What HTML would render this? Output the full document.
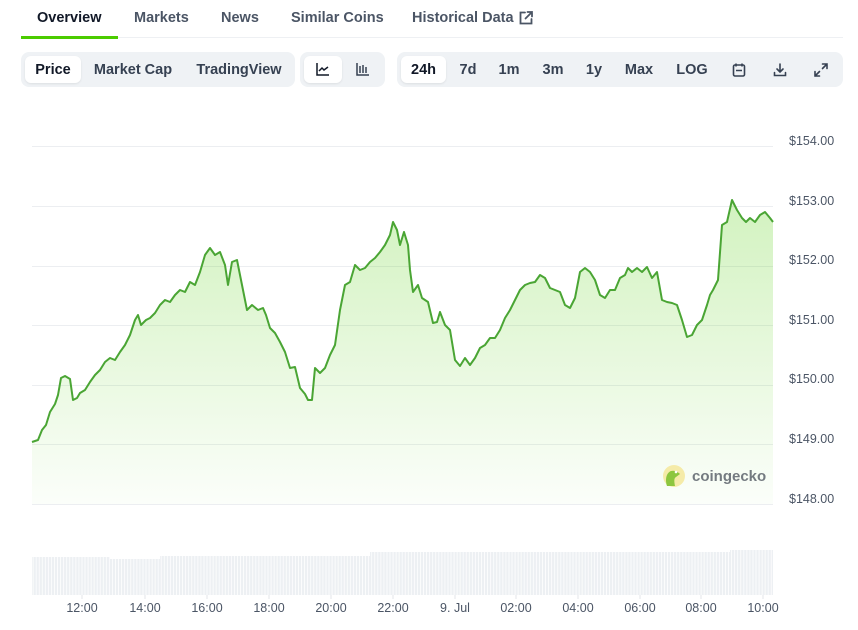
<!DOCTYPE html>
<html><head><meta charset="utf-8"><style>
*{margin:0;padding:0;box-sizing:border-box}
body{width:858px;height:630px;background:#fff;font-family:"Liberation Sans",sans-serif;position:relative;overflow:hidden;color:#4b5565}
.a{position:absolute;white-space:nowrap}
.tab{top:10px;font-size:14.5px;font-weight:bold;color:#4b5565}
.grp{position:absolute;top:52px;height:35px;background:#eff2f5;border-radius:8px}
.btn{position:absolute;top:4px;height:27px;line-height:29px;font-size:14.5px;font-weight:bold;color:#364152;text-align:center}
.on{background:#fff;border-radius:6px;box-shadow:0 1px 2px rgba(0,0,0,.08);color:#111827}
.yl{left:789px;font-size:12.5px;color:#4b5565}
.xl{top:601px;font-size:12.5px;color:#4b5565;transform:translateX(-50%)}
</style></head><body>
<div class="a tab" style="left:37px;color:#111827">Overview</div>
<div class="a tab" style="left:134px">Markets</div>
<div class="a tab" style="left:221px">News</div>
<div class="a tab" style="left:291px">Similar Coins</div>
<div class="a tab" style="left:412px">Historical Data</div>
<svg class="a" style="left:518px;top:10px" width="16" height="16" viewBox="0 0 16 16" fill="none" stroke="#4b5565" stroke-width="1.8" stroke-linecap="round"><path d="M7 2.5H2.5v11h11V9M9.5 2h4.5v4.5M14 2L7.5 8.5"/></svg>
<div class="a" style="left:21px;top:37px;width:822px;height:1px;background:#eef0f3"></div>
<div class="a" style="left:21px;top:36px;width:97px;height:3px;background:#4bcc00"></div>

<div class="grp" style="left:21px;width:274px">
<div class="btn on" style="left:4px;width:56px">Price</div>
<div class="btn" style="left:66px;width:92px">Market Cap</div>
<div class="btn" style="left:168px;width:100px">TradingView</div>
</div>
<div class="grp" style="left:300px;width:85px">
<div class="btn on" style="left:4px;width:38px"><svg width="16" height="16" viewBox="0 0 16 16" style="margin-top:5px" fill="none" stroke="#111827" stroke-width="1.5"><path d="M2 2v12h12M4 10l3-3 2 2 4-3"/></svg></div>
<div class="btn" style="left:44px;width:38px"><svg width="16" height="16" viewBox="0 0 16 16" style="margin-top:5px" fill="none" stroke="#364152" stroke-width="1.5"><path d="M2 2v12h12M5 5v7M8 4v8M11 6v6"/></svg></div>
</div>
<div class="grp" style="left:397px;width:446px">
<div class="btn on" style="left:4px;width:45px">24h</div>
<div class="btn" style="left:56px;width:30px">7d</div>
<div class="btn" style="left:96px;width:32px">1m</div>
<div class="btn" style="left:139px;width:34px">3m</div>
<div class="btn" style="left:183px;width:28px">1y</div>
<div class="btn" style="left:222px;width:40px">Max</div>
<div class="btn" style="left:274px;width:42px">LOG</div>
<svg class="a" style="left:334px;top:10px" width="16" height="16" viewBox="0 0 16 16" fill="none" stroke="#364152" stroke-width="1.6"><rect x="2.5" y="3" width="11" height="11" rx="1.5"/><path d="M5 1.5v3M11 1.5v3M5 8.5h6"/></svg>
<svg class="a" style="left:375px;top:10px" width="16" height="16" viewBox="0 0 16 16" fill="none" stroke="#364152" stroke-width="1.6" stroke-linecap="round"><path d="M8 2v8M5 7l3 3 3-3M2.5 10.5v3h11v-3"/></svg>
<svg class="a" style="left:416px;top:10px" width="16" height="16" viewBox="0 0 16 16" fill="none" stroke="#364152" stroke-width="1.6" stroke-linecap="round"><path d="M9.5 2H14v4.5M14 2L9.5 6.5M6.5 14H2V9.5M2 14l4.5-4.5"/></svg>
</div>

<svg class="a" style="left:0;top:0" width="858" height="630">
<defs><linearGradient id="g" x1="0" y1="0" x2="0" y2="1"><stop offset="0" stop-color="#4bcc00" stop-opacity=".25"/><stop offset="1" stop-color="#4bcc00" stop-opacity=".02"/></linearGradient>
<pattern id="vb" width="3.05" height="60" patternUnits="userSpaceOnUse"><rect x="0" y="0" width="2.3" height="60" fill="#edf0f3"/></pattern></defs>
<g stroke="#eceef1" stroke-width="1"><path d="M32 146.5H773M32 206.5H773M32 266.5H773M32 325.5H773M32 385.5H773M32 444.5H773M32 504.5H773"/></g>
<path fill="url(#vb)" d="M32 557H110V559H160V556H370V552H730V550H773V595H32Z"/>
<g stroke="#e3e6ea"><path d="M82 595v4M145 595v4M207 595v4M269 595v4M331 595v4M393 595v4M455 595v4M516 595v4M578 595v4M640 595v4M701 595v4M763 595v4"/></g>
<path fill="url(#g)" d="M32 442L38 440L42 430L46 425L50 412L55 404L58 395L61 378L65 376L70 379L73 400L77 398L80 393L85 390L90 382L95 375L100 370L105 362L110 358L115 360L120 352L125 345L130 335L135 320L138 315L141 325L146 320L150 318L155 313L160 305L165 300L170 302L175 295L180 290L185 292L190 282L195 285L200 272L205 255L210 248L215 255L220 252L225 265L228 285L232 262L237 260L242 285L247 310L252 305L258 310L263 308L266 315L270 328L275 333L280 342L285 352L290 368L295 367L300 388L305 394L308 400L312 400L315 368L320 373L325 368L330 355L335 345L340 310L345 285L350 282L355 265L360 270L365 268L370 262L375 258L380 252L385 245L390 235L393 222L397 230L400 245L404 232L408 245L410 270L413 292L418 285L422 298L428 302L433 323L437 322L440 312L445 325L450 330L455 360L460 366L465 358L470 365L475 358L480 348L485 345L490 338L495 338L500 330L505 318L510 310L515 300L520 290L525 285L530 283L535 282L540 275L545 278L550 288L555 290L560 292L565 305L570 308L575 298L580 272L585 268L590 272L595 280L600 295L605 298L610 290L615 290L620 278L625 275L628 268L632 272L637 268L642 272L647 267L652 278L657 272L662 300L667 302L672 303L677 305L682 320L687 337L692 335L697 325L702 320L707 305L710 295L713 290L718 280L722 225L727 222L732 200L737 210L742 218L746 222L750 218L755 222L760 215L765 212L770 218L773 222L773 504L32 504Z"/>
<path fill="none" stroke="#4aa534" stroke-width="2" stroke-linejoin="round" d="M32 442L38 440L42 430L46 425L50 412L55 404L58 395L61 378L65 376L70 379L73 400L77 398L80 393L85 390L90 382L95 375L100 370L105 362L110 358L115 360L120 352L125 345L130 335L135 320L138 315L141 325L146 320L150 318L155 313L160 305L165 300L170 302L175 295L180 290L185 292L190 282L195 285L200 272L205 255L210 248L215 255L220 252L225 265L228 285L232 262L237 260L242 285L247 310L252 305L258 310L263 308L266 315L270 328L275 333L280 342L285 352L290 368L295 367L300 388L305 394L308 400L312 400L315 368L320 373L325 368L330 355L335 345L340 310L345 285L350 282L355 265L360 270L365 268L370 262L375 258L380 252L385 245L390 235L393 222L397 230L400 245L404 232L408 245L410 270L413 292L418 285L422 298L428 302L433 323L437 322L440 312L445 325L450 330L455 360L460 366L465 358L470 365L475 358L480 348L485 345L490 338L495 338L500 330L505 318L510 310L515 300L520 290L525 285L530 283L535 282L540 275L545 278L550 288L555 290L560 292L565 305L570 308L575 298L580 272L585 268L590 272L595 280L600 295L605 298L610 290L615 290L620 278L625 275L628 268L632 272L637 268L642 272L647 267L652 278L657 272L662 300L667 302L672 303L677 305L682 320L687 337L692 335L697 325L702 320L707 305L710 295L713 290L718 280L722 225L727 222L732 200L737 210L742 218L746 222L750 218L755 222L760 215L765 212L770 218L773 222"/>
<circle cx="674" cy="476" r="11" fill="#f5e79a" opacity=".85"/>
<path d="M667 486c-2-6-1-13 4-15 4-1 7 1 9 3l-4 3c-2 1-2 4-1 9z" fill="#8dc63f"/>
<circle cx="676" cy="472" r="1.3" fill="#fff"/>
<text x="692" y="481" font-family="Liberation Sans,sans-serif" font-size="15" font-weight="bold" fill="#747a80">coingecko</text>
</svg>

<div class="a yl" style="top:134px">$154.00</div>
<div class="a yl" style="top:194px">$153.00</div>
<div class="a yl" style="top:253px">$152.00</div>
<div class="a yl" style="top:313px">$151.00</div>
<div class="a yl" style="top:372px">$150.00</div>
<div class="a yl" style="top:432px">$149.00</div>
<div class="a yl" style="top:492px">$148.00</div>

<div class="a xl" style="left:82px">12:00</div>
<div class="a xl" style="left:145px">14:00</div>
<div class="a xl" style="left:207px">16:00</div>
<div class="a xl" style="left:269px">18:00</div>
<div class="a xl" style="left:331px">20:00</div>
<div class="a xl" style="left:393px">22:00</div>
<div class="a xl" style="left:455px">9. Jul</div>
<div class="a xl" style="left:516px">02:00</div>
<div class="a xl" style="left:578px">04:00</div>
<div class="a xl" style="left:640px">06:00</div>
<div class="a xl" style="left:701px">08:00</div>
<div class="a xl" style="left:763px">10:00</div>
</body></html>
